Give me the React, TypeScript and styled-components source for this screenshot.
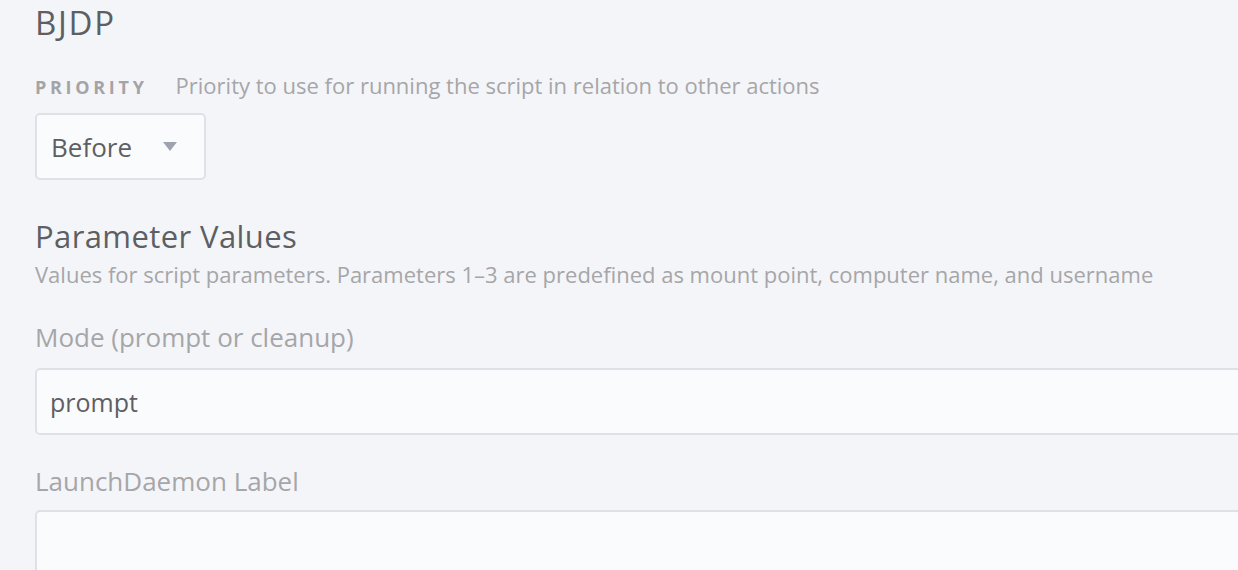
import styled, { createGlobalStyle } from 'styled-components'

const GlobalStyle = createGlobalStyle`
  html, body {
    margin: 0;
    padding: 0;
    background: #f4f5f9;
    overflow: hidden;
  }
  body {
    font-family: 'Open Sans', Lato, sans-serif;
  }
`

const Page = styled.main`
  padding: 3px 0 0 35px;
  width: 1280px;
  min-height: 570px;
  box-sizing: border-box;
`

const Title = styled.h1`
  margin: 0;
  font-size: 33px;
  line-height: 40px;
  font-weight: 400;
  letter-spacing: 1.7px;
  color: #5d5f63;
`

const MetaRow = styled.div`
  display: flex;
  align-items: baseline;
  gap: 28px;
  margin-top: 28px;
  line-height: 28px;
`

const Caps = styled.span`
  font-size: 18px;
  font-weight: 700;
  letter-spacing: 3.7px;
  color: #a4a4a6;
`

const Hint = styled.span`
  font-size: 22px;
  color: #a6a6a8;
`

const Select = styled.div`
  display: flex;
  align-items: center;
  gap: 31px;
  box-sizing: border-box;
  width: 171px;
  height: 67px;
  margin-top: 12px;
  padding: 0 28px 0 14px;
  border: 2px solid #e0e1e6;
  border-radius: 5px;
  background: #fafbfc;
  font-size: 26px;
  color: #5d5f63;
`

const Caret = styled.span`
  width: 0;
  height: 0;
  border-left: 7px solid transparent;
  border-right: 7px solid transparent;
  border-top: 9px solid #9ea3b0;
`

const Section = styled.section`
  margin-top: 38px;
`

const Heading = styled.h2`
  margin: 0;
  font-size: 31px;
  line-height: 36px;
  font-weight: 400;
  letter-spacing: 0.4px;
  color: #5d5f63;
`

const Description = styled.p`
  margin: 6px 0 0;
  font-size: 22px;
  line-height: 28px;
  color: #a6a6a8;
`

const Field = styled.div<{ $top: number }>`
  margin-top: ${p => p.$top}px;
`

const Label = styled.label`
  display: block;
  font-size: 26px;
  line-height: 32px;
  color: #a6a6a8;
`

const Input = styled.div<{ $gap: number }>`
  box-sizing: border-box;
  width: 1260px;
  height: 67px;
  margin-top: ${p => p.$gap}px;
  padding: 0 13px;
  display: flex;
  align-items: center;
  border: 2px solid #e0e1e6;
  border-radius: 5px;
  background: #fafbfc;
  font-size: 25px;
  color: #5d5f63;
`

export default function App() {
  return (
    <>
      <GlobalStyle />
      <Page>
        <Title>BJDP</Title>
        <MetaRow>
          <Caps>PRIORITY</Caps>
          <Hint>Priority to use for running the script in relation to other actions</Hint>
        </MetaRow>
        <Select>
          Before
          <Caret />
        </Select>
        <Section>
          <Heading>Parameter Values</Heading>
          <Description>
            Values for script parameters. Parameters 1–3 are predefined as mount point, computer name, and username
          </Description>
          <Field $top={33}>
            <Label>Mode (prompt or cleanup)</Label>
            <Input $gap={15}>prompt</Input>
          </Field>
          <Field $top={30}>
            <Label>LaunchDaemon Label</Label>
            <Input $gap={13} />
          </Field>
        </Section>
      </Page>
    </>
  )
}
